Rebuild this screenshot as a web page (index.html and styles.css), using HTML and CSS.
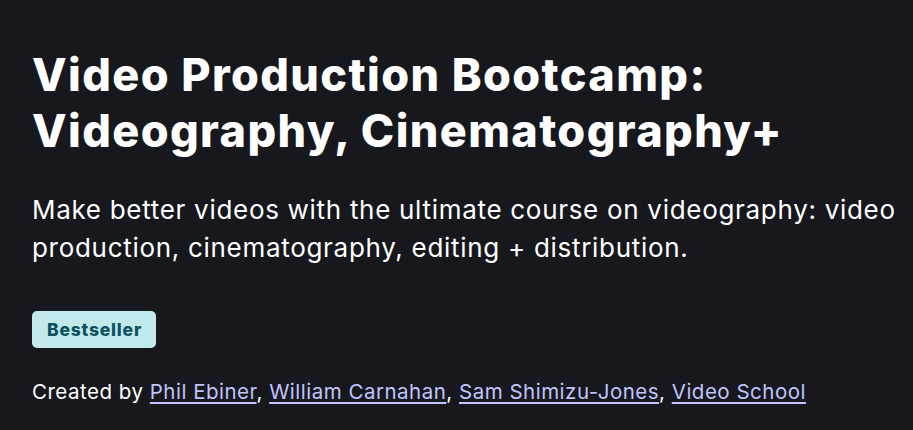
FILE: index.html
```html
<!DOCTYPE html>
<html lang="en">
<head>
<meta charset="utf-8">
<title>Video Production Bootcamp</title>
<link rel="stylesheet" href="styles.css">
</head>
<body>
<main class="hero">
  <h1 class="title">Video Production Bootcamp: Videography, Cinematography+</h1>
  <p class="subtitle">Make better videos with the ultimate course on videography: video production, cinematography, editing + distribution.</p>
  <div class="badges"><span class="badge">Bestseller</span></div>
  <p class="creators">Created by <a href="#">Phil Ebiner</a>, <a href="#">William Carnahan</a>, <a href="#">Sam Shimizu-Jones</a>, <a href="#">Video School</a></p>
</main>
</body>
</html>
```
FILE: styles.css
```css
html, body {
  margin: 0;
  padding: 0;
  background: #17181d;
}
body {
  font-family: Inter, "Liberation Sans", Arial, sans-serif;
  color: #ffffff;
}
.hero {
  padding: 47px 0 0 32px;
  display: flex;
  flex-direction: column;
  align-items: flex-start;
}
.title {
  margin: 0;
  font-size: 45px;
  line-height: 56px;
  font-weight: 800;
  letter-spacing: 1.4px;
  max-width: 860px;
}
.subtitle {
  margin: 32px 0 0 0;
  font-size: 26px;
  line-height: 38px;
  letter-spacing: 0.7px;
  max-width: 875px;
}
.badges {
  margin-top: 44px;
  display: flex;
}
.badge {
  display: block;
  background: #c2e9eb;
  color: #0d5261;
  font-size: 17.5px;
  font-weight: 800;
  letter-spacing: 0.8px;
  padding: 0 14px 0 15px;
  height: 37px;
  line-height: 37px;
  border-radius: 5px;
}
.creators {
  margin: 30px 0 0 0;
  font-size: 20.5px;
  line-height: 28px;
  letter-spacing: 0.5px;
}
.creators a {
  color: #c0c4fc;
  text-decoration: underline;
  text-decoration-thickness: 1.5px;
  text-underline-offset: 3px;
}
```
